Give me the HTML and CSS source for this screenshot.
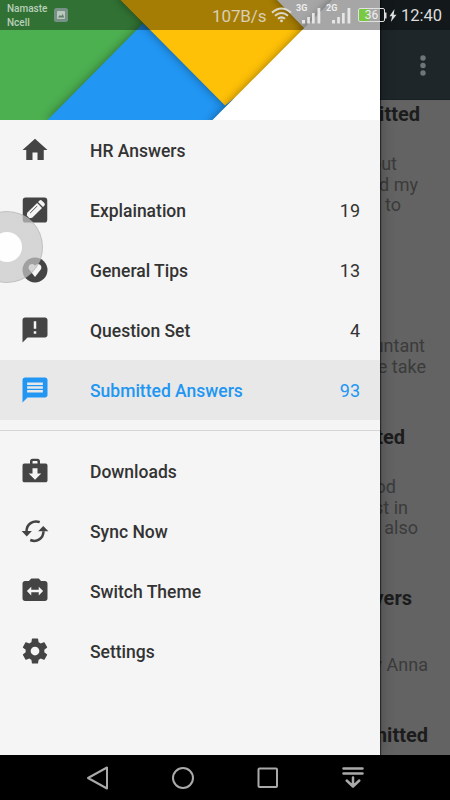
FILE: index.html
```
<!DOCTYPE html>
<html lang="en">
<head>
  <meta charset="UTF-8">
  <meta name="viewport" content="width=device-width, initial-scale=1">
  <title>HR Answers</title>
  <link rel="stylesheet" href="styles.css">
</head>
<body>
<div class="phone">
  <div class="screen">
    <!-- page behind the drawer -->
    <main class="page">
      <div class="toolbar">
        <svg class="more" viewBox="0 0 6 22" fill="#6f7678"><circle cx="3" cy="3" r="2.700"/><circle cx="3" cy="10.500" r="2.700"/><circle cx="3" cy="18" r="2.700"/></svg>
      </div>
      <article class="post post-1">
        <h2 class="r30">mitted</h2>
        <p><span class="r53">bout</span><span class="r32">d my</span><span class="r49">s to</span></p>
      </article>
      <article class="post post-2">
        <p><span class="r25">untant</span><span class="r24">e take</span></p>
      </article>
      <article class="post post-3">
        <h2 class="r45">ted</h2>
        <p><span class="r54">od</span><span class="r42">st in</span><span class="r32">also</span></p>
      </article>
      <article class="post post-4">
        <h2 class="r38">vers</h2>
        <p><span class="r22">y Anna</span></p>
      </article>
      <article class="post post-5">
        <h2 class="r22">mitted</h2>
      </article>
    </main>

    <aside class="drawer">
      <svg class="cover" viewBox="0 0 380 120">
        <rect width="380" height="120" fill="#4caf50"/>
        <path class="sheet" fill="#2196f3" d="M46.500 121 143 23.500 260 121Z"/>
        <path class="sheet" fill="#ffc107" d="M119.500-1V-20H360V0L225 105.500Z"/>
        <path class="sheet" fill="#fff" d="M276-1 305 29 340 0V-20H276Z"/>
        <path class="sheet" fill="#fff" d="M211.500 121 333-1 400-20V140H211Z"/>
      </svg>
      <nav>
        <ul class="menu">
          <li>
            <svg viewBox="0 0 24 24"><path d="M10 20v-6h4v6h5v-8h3L12 3 2 12h3v8z"/></svg>
            <span>HR Answers</span>
          </li>
          <li>
            <svg viewBox="0 0 24 24"><rect x="2.200" y="2" width="19.600" height="20" rx="2.300"/><g transform="rotate(45 12 12)" fill="#f5f5f5"><path d="M9.200 4.300q0-1.500 1.500-1.500h2.600q1.500 0 1.500 1.500v1.500H9.200z"/><path d="M9.200 6.800h5.600v11.200L13.500 19.800h-3L9.200 18z"/><path d="M11 8.500v8" stroke="#444" stroke-width=".7"/></g></svg>
            <span>Explaination</span><b>19</b>
          </li>
          <li>
            <svg viewBox="0 0 24 24"><circle cx="12" cy="12" r="10"/><path fill="#f5f5f5" d="M12 17.500 7.500 11.800C5.200 8.600 9.800 5.300 12 8.600c2.200-3.300 6.800 0 4.500 3.200z"/></svg>
            <span>General Tips</span><b>13</b>
          </li>
          <li>
            <svg viewBox="0 0 24 24"><path d="M20 2H4c-1.100 0-1.990.9-1.990 2L2 22l4-4h14c1.100 0 2-.9 2-2V4c0-1.100-.9-2-2-2zm-7 13h-2v-2h2v2zm0-4h-2V5h2v6z"/></svg>
            <span>Question Set</span><b>4</b>
          </li>
          <li class="active">
            <svg viewBox="0 0 24 24"><path d="M20 2H4c-1.100 0-1.990.9-1.990 2L2 22l4-4h14c1.100 0 2-.9 2-2V4c0-1.100-.9-2-2-2zM18.300 14H5.700v-2h12.600v2zm0-3H5.700V9h12.600v2zm0-3H5.700V6h12.600v2z"/></svg>
            <span>Submitted Answers</span><b>93</b>
          </li>
        </ul>
        <ul class="menu extra">
          <li>
            <svg viewBox="0 0 24 24"><path fill-rule="evenodd" d="M8 6V4.200C8 3 8.800 2.200 10 2.200h4c1.200 0 2 .8 2 2V6h4.500c.8 0 1.500.7 1.500 1.500v12c0 .8-.7 1.500-1.500 1.500h-17C2.700 21 2 20.300 2 19.500v-12C2 6.700 2.700 6 3.500 6zm2 0h4V4.500q0-.5-.5-.5h-3q-.5 0-.5.500zm0 3.700v4.200H7l5 5 5-5h-3V9.700z"/></svg>
            <span>Downloads</span>
          </li>
          <li>
            <svg viewBox="0 0 24 24"><g fill="none" stroke="#444" stroke-width="2"><path d="M15.800 4.900C10.500 3.100 5.300 6.400 5.200 12.200"/><path d="M8.200 19.200C13.500 21.400 18.700 18 18.800 12.200"/></g><path d="M1.300 12h8.200l-4.100 4.300zM22.700 12.200h-8.200l4.100-4.300z"/></svg>
            <span>Sync Now</span>
          </li>
          <li>
            <svg viewBox="0 0 24 24"><path d="M20 4h-3.170L15 2H9L7.170 4H4c-1.100 0-2 .9-2 2v12c0 1.100.9 2 2 2h16c1.100 0 2-.9 2-2V6c0-1.100-.9-2-2-2zm-5 11.500V13H9v2.500L5.500 12 9 8.500V11h6V8.500l3.500 3.500-3.500 3.500z"/></svg>
            <span>Switch Theme</span>
          </li>
          <li>
            <svg viewBox="0 0 24 24"><path d="M19.430 12.980c.04-.32.070-.64.070-.98s-.03-.66-.07-.98l2.110-1.650c.19-.15.24-.42.12-.64l-2-3.460c-.12-.22-.39-.3-.61-.22l-2.490 1c-.52-.4-1.080-.73-1.690-.98l-.38-2.650C14.460 2.180 14.250 2 14 2h-4c-.25 0-.46.18-.49.42l-.38 2.650c-.61.25-1.170.59-1.690.98l-2.490-1c-.23-.09-.49 0-.61.22l-2 3.460c-.13.22-.07.49.12.64l2.110 1.650c-.04.32-.07.65-.07.98s.03.66.070.98l-2.110 1.650c-.19.15-.24.42-.12.64l2 3.460c.12.22.39.3.61.22l2.490-1c.52.4 1.080.73 1.690.98l.38 2.650c.03.24.24.42.49.42h4c.25 0 .46-.18.49-.42l.38-2.650c.61-.25 1.170-.59 1.690-.98l2.490 1c.23.09.49 0 .61-.22l2-3.460c.12-.22.070-.49-.12-.64l-2.110-1.650zM12 15.500c-1.930 0-3.500-1.570-3.500-3.500s1.570-3.500 3.500-3.500 3.500 1.570 3.500 3.500-1.570 3.500-3.500 3.500z"/></svg>
            <span>Settings</span>
          </li>
        </ul>
      </nav>
    </aside>

    <header class="status">
      <div class="carrier">Namaste<br>Ncell</div>
      <svg class="thumb" viewBox="0 0 14 14"><rect width="14" height="14" rx="2.500" fill="#789186"/><rect x="3" y="3" width="8" height="8" rx=".8" fill="#b9cabd"/><path d="M4 9.500 5.800 7l1.300 1.200L8.700 6 10.200 9.500z" fill="#607b6e"/></svg>
      <span class="speed">107B/s</span>
      <svg class="wifi" viewBox="0 0 22 16" fill="none" stroke="#ddd8cc" stroke-width="2.100"><path d="M1 5.500q10-8.500 20 0M4.200 8.800q6.800-5.800 13.600 0M7.300 12q3.700-3.100 7.400 0"/><circle cx="11" cy="14.200" r="1.500" fill="#ddd8cc" stroke="none"/></svg>
      <div class="signal"><small>3G</small><svg viewBox="0 0 20 17" fill="#e6e6e6"><rect x="0" y="13" width="3" height="3.500"/><rect x="5.200" y="10" width="2.700" height="6.500"/><rect x="10" y="6" width="2.700" height="10.500"/><rect x="15.500" y="1" width="2.800" height="15.500"/></svg></div>
      <div class="signal"><small>2G</small><svg viewBox="0 0 20 17" fill="#e6e6e6"><rect x="0" y="13" width="3" height="3.500"/><rect x="5.200" y="10" width="2.700" height="6.500"/><rect x="10" y="6" width="2.700" height="10.500"/><rect x="15.500" y="1" width="2.800" height="15.500"/></svg></div>
      <div class="battery">36</div>
      <svg class="bolt" viewBox="0 0 12 15" fill="#ddd"><path d="M0 4.500h1.500v6H0zM9.500 1 4.500 8.300h2.600L5.800 14 11.500 6.700H8.700z"/></svg>
      <time>12:40</time>
    </header>

    <div class="assist"></div>
  </div>

  <footer class="navbar">
    <svg viewBox="0 0 24 24"><path d="M2 12 21 1.500v21z"/></svg>
    <svg viewBox="0 0 24 24"><circle cx="12" cy="12" r="10"/></svg>
    <svg viewBox="0 0 24 24"><rect x="2.500" y="2.500" width="18.500" height="18.500" rx="1"/></svg>
    <svg class="pull" viewBox="0 0 24 24"><path d="M2.500 2.500h19M2.500 7.500h19M12 11.500v8.500M5.700 14.500l6.300 6 6.300-6"/></svg>
  </footer>
</div>
</body>
</html>
```
FILE: styles.css
```
* { box-sizing: border-box; }
body {
  margin: 0;
  font-family: Roboto, 'Liberation Sans', sans-serif;
  background: #000;
}
.phone {
  width: 450px;
  height: 800px;
  display: flex;
  flex-direction: column;
  overflow: hidden;
}
.screen {
  position: relative;
  height: 755px;
  overflow: hidden;
}

/* page */
.page {
  height: 755px;
  background: #636363;
  overflow: hidden;
}
.toolbar {
  height: 100px;
  padding: 55px 24px 0 0;
  display: flex;
  justify-content: flex-end;
  background: #1e262a;
  border-bottom: 1px solid #182023;
}
.more {
  width: 6px;
  height: 22px;
}
.post {
  text-align: right;
  color: #3b3b3b;
}
.post h2 {
  margin: 0;
  font-size: 20px;
  line-height: 28px;
  font-weight: 700;
  color: #1c1c1c;
}
.post p {
  margin: 0;
  font-size: 18px;
  line-height: 20.700px;
}
.post span { display: block; }
.post-1 { height: 235px; }
.post-1 p { padding-top: 26px; }
.post-2 { height: 88px; padding-top: 1px; }
.post-3 { height: 161px; }
.post-3 p { padding-top: 26px; }
.post-4 { height: 137px; }
.post-4 p { padding-top: 43px; }

/* line ends of the ragged text column */
.r22 { padding-right: 22px; }
.r24 { padding-right: 24px; }
.r25 { padding-right: 25px; }
.r30 { padding-right: 30px; }
.r32 { padding-right: 32px; }
.r38 { padding-right: 38px; }
.r42 { padding-right: 42px; }
.r45 { padding-right: 45px; }
.r49 { padding-right: 49px; }
.r53 { padding-right: 53px; }
.r54 { padding-right: 54px; }

/* drawer */
.drawer {
  position: absolute;
  top: 0;
  left: 0;
  width: 380px;
  height: 755px;
  background: #f5f5f5;
  box-shadow: 0 0 1px 1px rgba(0,0,0,.5), 0 0 14px rgba(0,0,0,.3);
}
.cover {
  display: block;
  width: 380px;
  height: 120px;
  overflow: hidden;
}
.sheet {
  filter: drop-shadow(0 0 5px rgba(0,0,0,.4));
}
.menu {
  margin: 0;
  padding: 0;
  list-style: none;
}
.menu li {
  height: 60px;
  padding: 0 20px;
  display: flex;
  align-items: center;
  font-size: 18px;
  color: #333;
}
.menu svg {
  width: 30px;
  height: 30px;
  margin-right: 40px;
  fill: #444;
}
.menu span {
  font-size: 17.500px;
  font-weight: 500;
  padding-top: 1px;
}
.menu b {
  margin-left: auto;
  padding-top: 1px;
  font-weight: 400;
}
.menu .active {
  background: #e8e8e8;
  color: #2196f3;
}
.menu .active svg { fill: #2196f3; }
.menu.extra {
  margin-top: 10px;
  padding-top: 10px;
  border-top: 1px solid #d6d6d6;
}

/* status bar */
.status {
  position: absolute;
  top: 0;
  left: 0;
  width: 450px;
  height: 30px;
  padding-left: 7px;
  display: flex;
  align-items: center;
  background: rgba(0,0,0,.35);
  color: #ddd;
}
.carrier {
  width: 47px;
  padding-top: 1px;
  font-size: 10px;
  line-height: 13.500px;
  font-weight: 500;
  color: #b9cfba;
}
.thumb {
  width: 14px;
  height: 14px;
}
.speed {
  width: 59px;
  margin-left: 144px;
  padding-top: 1px;
  font-size: 17px;
  letter-spacing: -.1px;
  color: #d9cfb5;
}
.wifi {
  width: 21px;
  height: 16px;
  margin-right: 4px;
}
.signal {
  width: 30px;
  height: 23px;
  padding-left: 6px;
  position: relative;
}
.signal small {
  position: absolute;
  top: 0;
  left: 0;
  font-size: 9px;
  line-height: 9px;
  font-weight: 700;
  color: #eee;
}
.signal svg {
  width: 20px;
  height: 17px;
  margin-top: 3px;
}
.battery {
  width: 27px;
  height: 14px;
  margin-left: 2px;
  border: 1.500px solid #e0e0e0;
  border-radius: 2px;
  background: linear-gradient(to right, #7ac943 42%, transparent 42%);
  color: #eee;
  font-size: 12px;
  line-height: 12px;
  text-align: center;
}
.bolt {
  width: 12px;
  height: 15px;
}
.status time {
  margin-left: 4px;
  padding-top: 1px;
  font-size: 16.500px;
}

/* floating touch button */
.assist {
  position: absolute;
  top: 211px;
  left: -29px;
  width: 72px;
  height: 72px;
  border: 1px solid rgba(160,160,160,.4);
  border-radius: 50%;
  background: radial-gradient(circle, rgba(255,255,255,.9) 14.500px, rgba(200,200,200,.7) 15.500px);
}

/* android buttons */
.navbar {
  height: 45px;
  padding: 0 55px;
  display: flex;
  justify-content: space-around;
  align-items: center;
  background: #000;
}
.navbar svg {
  width: 24px;
  height: 24px;
  fill: none;
  stroke: #aaa;
  stroke-width: 2;
  stroke-linecap: round;
  stroke-linejoin: round;
}
.navbar .pull { stroke-width: 2.500; }
```
